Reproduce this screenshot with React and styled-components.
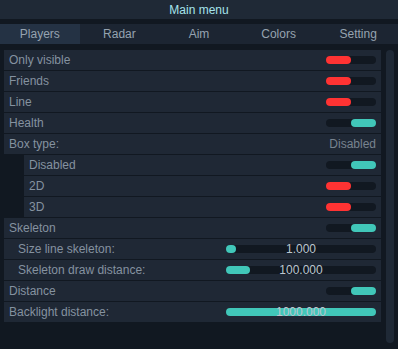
import styled, { createGlobalStyle } from "styled-components";

const Global = createGlobalStyle`
  html, body {
    margin: 0;
    padding: 0;
    background: #111821;
    font-family: "Liberation Sans", Arial, sans-serif;
  }
`;

const Window = styled.div`
  width: 398px;
  height: 349px;
  background: #111821;
  overflow: hidden;
`;

const TitleBar = styled.div`
  height: 19px;
  background: #1f2936;
  color: #a6e4ec;
  font-size: 12px;
  display: flex;
  align-items: center;
  justify-content: center;
`;

const Tabs = styled.div`
  margin-top: 5px;
  height: 20px;
  display: grid;
  grid-template-columns: repeat(5, 1fr);
  background: #1c2532;
`;

const Tab = styled.div`
  display: flex;
  align-items: center;
  justify-content: center;
  font-size: 12px;
  color: #96a3b0;
  background: ${(p) => (p.active ? "#243244" : "transparent")};
`;

const Body = styled.div`
  margin-top: 6px;
  display: flex;
  padding: 0 4px;
  gap: 5px;
`;

const List = styled.div`
  flex: 1;
  display: flex;
  flex-direction: column;
  gap: 1px;
`;

const Row = styled.div`
  height: 20px;
  margin-left: ${(p) => (p.nested ? "20px" : "0")};
  padding: 0 5px 0 ${(p) => (p.sub ? "14px" : "5px")};
  background: #1f2835;
  display: flex;
  align-items: center;
  justify-content: space-between;
  font-size: 12px;
  color: #8592a0;
`;

const Label = styled.span`
  white-space: nowrap;
`;

const Toggle = styled.div`
  width: 50px;
  height: 8px;
  border-radius: 4px;
  background: #111821;
  display: flex;
  justify-content: ${(p) => (p.on ? "flex-end" : "flex-start")};
`;

const Knob = styled.div`
  width: 25px;
  height: 8px;
  border-radius: 4px;
  background: ${(p) => (p.on ? "#41c7b9" : "#ff3333")};
`;

const Slider = styled.div`
  position: relative;
  width: 150px;
  height: 8px;
  border-radius: 4px;
  background: #111821;
`;

const Fill = styled.div`
  height: 8px;
  border-radius: 4px;
  background: #41c7b9;
`;

const SliderValue = styled.span`
  position: absolute;
  inset: 0;
  display: flex;
  align-items: center;
  justify-content: center;
  font-size: 12px;
  color: #bcc6cf;
`;

const Value = styled.span`
  color: #78838f;
`;

const Scrollbar = styled.div`
  width: 8px;
  height: 293px;
  border-radius: 4px;
  background: #1f2936;
`;

const SwitchRow = ({ label, on, nested }) => (
  <Row nested={nested}>
    <Label>{label}</Label>
    <Toggle on={on}>
      <Knob on={on} />
    </Toggle>
  </Row>
);

const SliderRow = ({ label, value, fill, sub }) => (
  <Row sub={sub}>
    <Label>{label}</Label>
    <Slider>
      <Fill style={{ width: fill }} />
      <SliderValue>{value}</SliderValue>
    </Slider>
  </Row>
);

const tabs = ["Players", "Radar", "Aim", "Colors", "Setting"];

export default function App() {
  return (
    <Window>
      <Global />
      <TitleBar>Main menu</TitleBar>
      <Tabs>
        {tabs.map((t, i) => (
          <Tab key={t} active={i === 0}>
            {t}
          </Tab>
        ))}
      </Tabs>
      <Body>
        <List>
          <SwitchRow label="Only visible" />
          <SwitchRow label="Friends" />
          <SwitchRow label="Line" />
          <SwitchRow label="Health" on />
          <Row>
            <Label>Box type:</Label>
            <Value>Disabled</Value>
          </Row>
          <SwitchRow label="Disabled" on nested />
          <SwitchRow label="2D" nested />
          <SwitchRow label="3D" nested />
          <SwitchRow label="Skeleton" on />
          <SliderRow label="Size line skeleton:" value="1.000" fill="10px" sub />
          <SliderRow label="Skeleton draw distance:" value="100.000" fill="24px" sub />
          <SwitchRow label="Distance" on />
          <SliderRow label="Backlight distance:" value="1000.000" fill="150px" />
        </List>
        <Scrollbar />
      </Body>
    </Window>
  );
}
